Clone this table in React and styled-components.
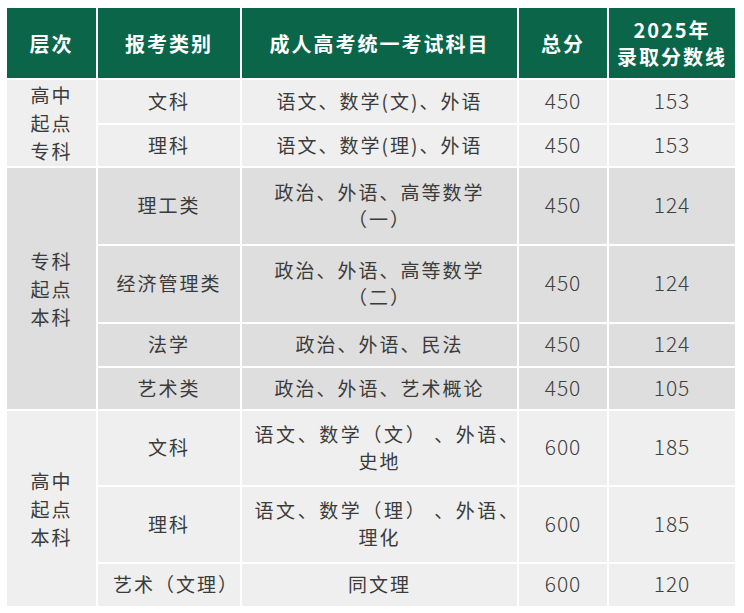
import React from 'react';
import styled, { createGlobalStyle } from 'styled-components';

const GlobalStyle = createGlobalStyle`
  html, body {
    margin: 0;
    padding: 0;
    background: #ffffff;
  }
  body {
    font-family: "Noto Sans CJK SC", "Noto Sans", sans-serif;
  }
`

const Page = styled.div`
  width: 744px;
  height: 613px;
  box-sizing: border-box;
  padding: 8px 9px 0 7px;
  background: #ffffff;
`

const Grid = styled.div`
  display: grid;
  grid-template-columns: 89px 142px 275px 88px 126px;
  grid-template-rows: 70px 43px 41px 76px 76px 42px 41px 74px 75px 42px;
  gap: 2px;
`

const shades = {
  head: '#0b6548',
  light: '#efefef',
  dark: '#dedede'
}

const Cell = styled.div`
  display: flex;
  align-items: center;
  justify-content: center;
  text-align: center;
  white-space: nowrap;
  background: ${p => shades[p.$tone || 'light']};
  color: #3b3b3b;
  font-size: 19px;
  letter-spacing: 2px;
  line-height: 27px;
  padding-bottom: 3px;
  grid-row: ${p => (p.$rows ? `span ${p.$rows}` : 'auto')};
`

const HeadCell = styled(Cell)`
  color: #ffffff;
  font-size: 20px;
  font-weight: 700;
  padding-bottom: 0;
`

const GroupCell = styled(Cell)`
  line-height: 28px;
  padding-bottom: 0;
`

const Line = styled.div`
  letter-spacing: ${p => (p.$wide ? '2.6px' : 'inherit')};
  transform: translateX(${p => p.$shift || 0}px);
`

const Num = styled.span`
  font-size: 21px;
  font-weight: 300;
  letter-spacing: 1px;
  color: #404040;
`

const Lines = ({ items, wide, shift }) => (
  <div>
    {items.map((t, i) => (
      <Line key={i} $wide={wide && i === 0} $shift={i === 0 ? shift : 0}>{t}</Line>
    ))}
  </div>
)

const groups = [
  {
    name: ['高中', '起点', '专科'],
    tone: 'light',
    rows: [
      { type: '文科', subj: ['语文、数学(文)、外语'], total: '450', line: '153' },
      { type: '理科', subj: ['语文、数学(理)、外语'], total: '450', line: '153' }
    ]
  },
  {
    name: ['专科', '起点', '本科'],
    tone: 'dark',
    rows: [
      { type: '理工类', subj: ['政治、外语、高等数学', '（一）'], total: '450', line: '124' },
      { type: '经济管理类', subj: ['政治、外语、高等数学', '（二）'], total: '450', line: '124' },
      { type: '法学', subj: ['政治、外语、民法'], total: '450', line: '124' },
      { type: '艺术类', subj: ['政治、外语、艺术概论'], total: '450', line: '105' }
    ]
  },
  {
    name: ['高中', '起点', '本科'],
    tone: 'light',
    rows: [
      { type: '文科', subj: ['语文、数学（文） 、外语、', '史地'], wide: true, total: '600', line: '185' },
      { type: '理科', subj: ['语文、数学（理） 、外语、', '理化'], wide: true, total: '600', line: '185' },
      { type: '艺术（文理）', typeShift: 7, subj: ['同文理'], total: '600', line: '120' }
    ]
  }
]

export default function App() {
  return (
    <Page>
      <GlobalStyle />
      <Grid>
        <HeadCell $tone="head">层次</HeadCell>
        <HeadCell $tone="head">报考类别</HeadCell>
        <HeadCell $tone="head">成人高考统一考试科目</HeadCell>
        <HeadCell $tone="head">总分</HeadCell>
        <HeadCell $tone="head">
          <Lines items={['2025年', '录取分数线']} />
        </HeadCell>
        {groups.map((g, gi) => (
          <React.Fragment key={gi}>
            {g.rows.map((r, ri) => (
              <React.Fragment key={ri}>
                {ri === 0 && (
                  <GroupCell $tone={g.tone} $rows={g.rows.length}>
                    <Lines items={g.name} />
                  </GroupCell>
                )}
                <Cell $tone={g.tone}>
                  <Lines items={[r.type]} shift={r.typeShift} />
                </Cell>
                <Cell $tone={g.tone}>
                  <Lines items={r.subj} wide={r.wide} shift={r.wide ? 8 : 0} />
                </Cell>
                <Cell $tone={g.tone}><Num>{r.total}</Num></Cell>
                <Cell $tone={g.tone}><Num>{r.line}</Num></Cell>
              </React.Fragment>
            ))}
          </React.Fragment>
        ))}
      </Grid>
    </Page>
  );
}
